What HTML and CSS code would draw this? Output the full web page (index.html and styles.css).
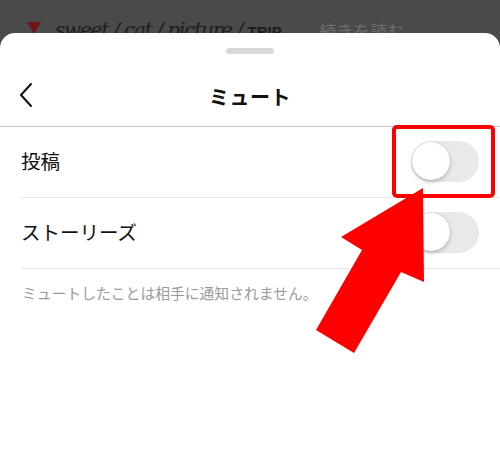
FILE: index.html
```html
<!DOCTYPE html>
<html lang="ja">
<head>
	<meta charset="UTF-8">
	<meta name="viewport" content="width=device-width, initial-scale=1.0">
	<title>ミュート</title>
	<link rel="stylesheet" href="styles.css">
</head>
<body>
	<div class="backdrop">
		<span class="tri"></span>
		<span class="tags">sweet / cat / picture / <b>TRIP</b>...</span>
		<span class="more">続きを読む</span>
	</div>

	<div class="sheet">
		<div class="handle"></div>
		<div class="header">
			<svg class="back" width="16" height="26" viewBox="0 0 16 26">
				<polyline points="13,2 3,13 13,24" fill="none" stroke="#111" stroke-width="2" stroke-linecap="round" stroke-linejoin="round"/>
			</svg>
			<h1>ミュート</h1>
		</div>
		<div class="row">
			<span class="label">投稿</span>
			<div class="toggle"><div class="knob"></div></div>
		</div>
		<div class="row">
			<span class="label">ストーリーズ</span>
			<div class="toggle"><div class="knob"></div></div>
		</div>
		<p class="note">ミュートしたことは相手に通知されません。</p>
	</div>

	<svg class="annotation" width="500" height="473" viewBox="0 0 500 473">
		<rect x="394" y="127" width="99" height="69" rx="3" fill="none" stroke="#f00" stroke-width="4"/>
		<polygon points="423,188 424,282 401,272 354,353 316,330 362,250 341,237" fill="#f00"/>
	</svg>
</body>
</html>
```

FILE: styles.css
```css
body {
	margin: 0;
	height: 473px;
	overflow: hidden;
	background: #4a4a4a;
	font-family: "Noto Sans CJK JP", "Noto Sans", sans-serif;
	display: flex;
	flex-direction: column;
	position: relative;
}
.backdrop {
	height: 33px;
	display: flex;
	align-items: flex-end;
	padding-left: 27px;
	overflow: hidden;
	white-space: nowrap;
	color: #1c1c1c;
}
.tri {
	width: 0;
	height: 0;
	border-left: 7px solid transparent;
	border-right: 7px solid transparent;
	border-top: 12px solid #701414;
	margin-bottom: -1px;
	margin-right: 14px;
}
.tags {
	font-family: "DejaVu Serif", serif;
	font-style: italic;
	font-size: 20px;
	line-height: 20px;
	margin-bottom: -9px;
	letter-spacing: -1.2px;
}
.tags b {
	font-family: "Liberation Sans", sans-serif;
	font-style: normal;
	font-size: 15px;
	letter-spacing: 0;
}
.more {
	font-size: 17px;
	line-height: 20px;
	color: #6e6e6e;
	margin-left: 22px;
	margin-bottom: -8px;
}
.sheet {
	flex: 1;
	background: #fff;
	border-radius: 15px 15px 0 0;
	display: flex;
	flex-direction: column;
}
.handle {
	width: 48px;
	height: 6px;
	border-radius: 3px;
	background: #d8d8d8;
	margin: 15px auto 0;
}
.header {
	height: 72px;
	border-bottom: 1px solid #c6c6c6;
	display: flex;
	align-items: center;
	justify-content: center;
	position: relative;
}
.back {
	position: absolute;
	left: 18px;
	top: 28px;
}
.header h1 {
	margin: 0;
	font-size: 20px;
	font-weight: 700;
	color: #111;
	letter-spacing: 0.5px;
	padding-top: 12px;
}
.row {
	height: 70px;
	margin-left: 21px;
	padding-right: 21px;
	border-bottom: 1px solid #e9e9e9;
	display: flex;
	align-items: center;
	justify-content: space-between;
}
.label {
	font-size: 19.5px;
	color: #111;
	margin-bottom: 4px;
}
.toggle {
	width: 68px;
	height: 41px;
	border-radius: 21px;
	background: #e9e9ea;
	position: relative;
	margin-bottom: 2px;
}
.knob {
	position: absolute;
	left: 1px;
	top: 1.5px;
	width: 38px;
	height: 38px;
	border-radius: 50%;
	background: #fff;
	box-shadow: 0 2px 4px rgba(0,0,0,0.22), 0 0 1px rgba(0,0,0,0.2);
}
.note {
	margin: 13px 0 0 22px;
	font-size: 14.8px;
	color: #9a9a9a;
}
.annotation {
	position: absolute;
	left: 0;
	top: 0;
	pointer-events: none;
}
```
